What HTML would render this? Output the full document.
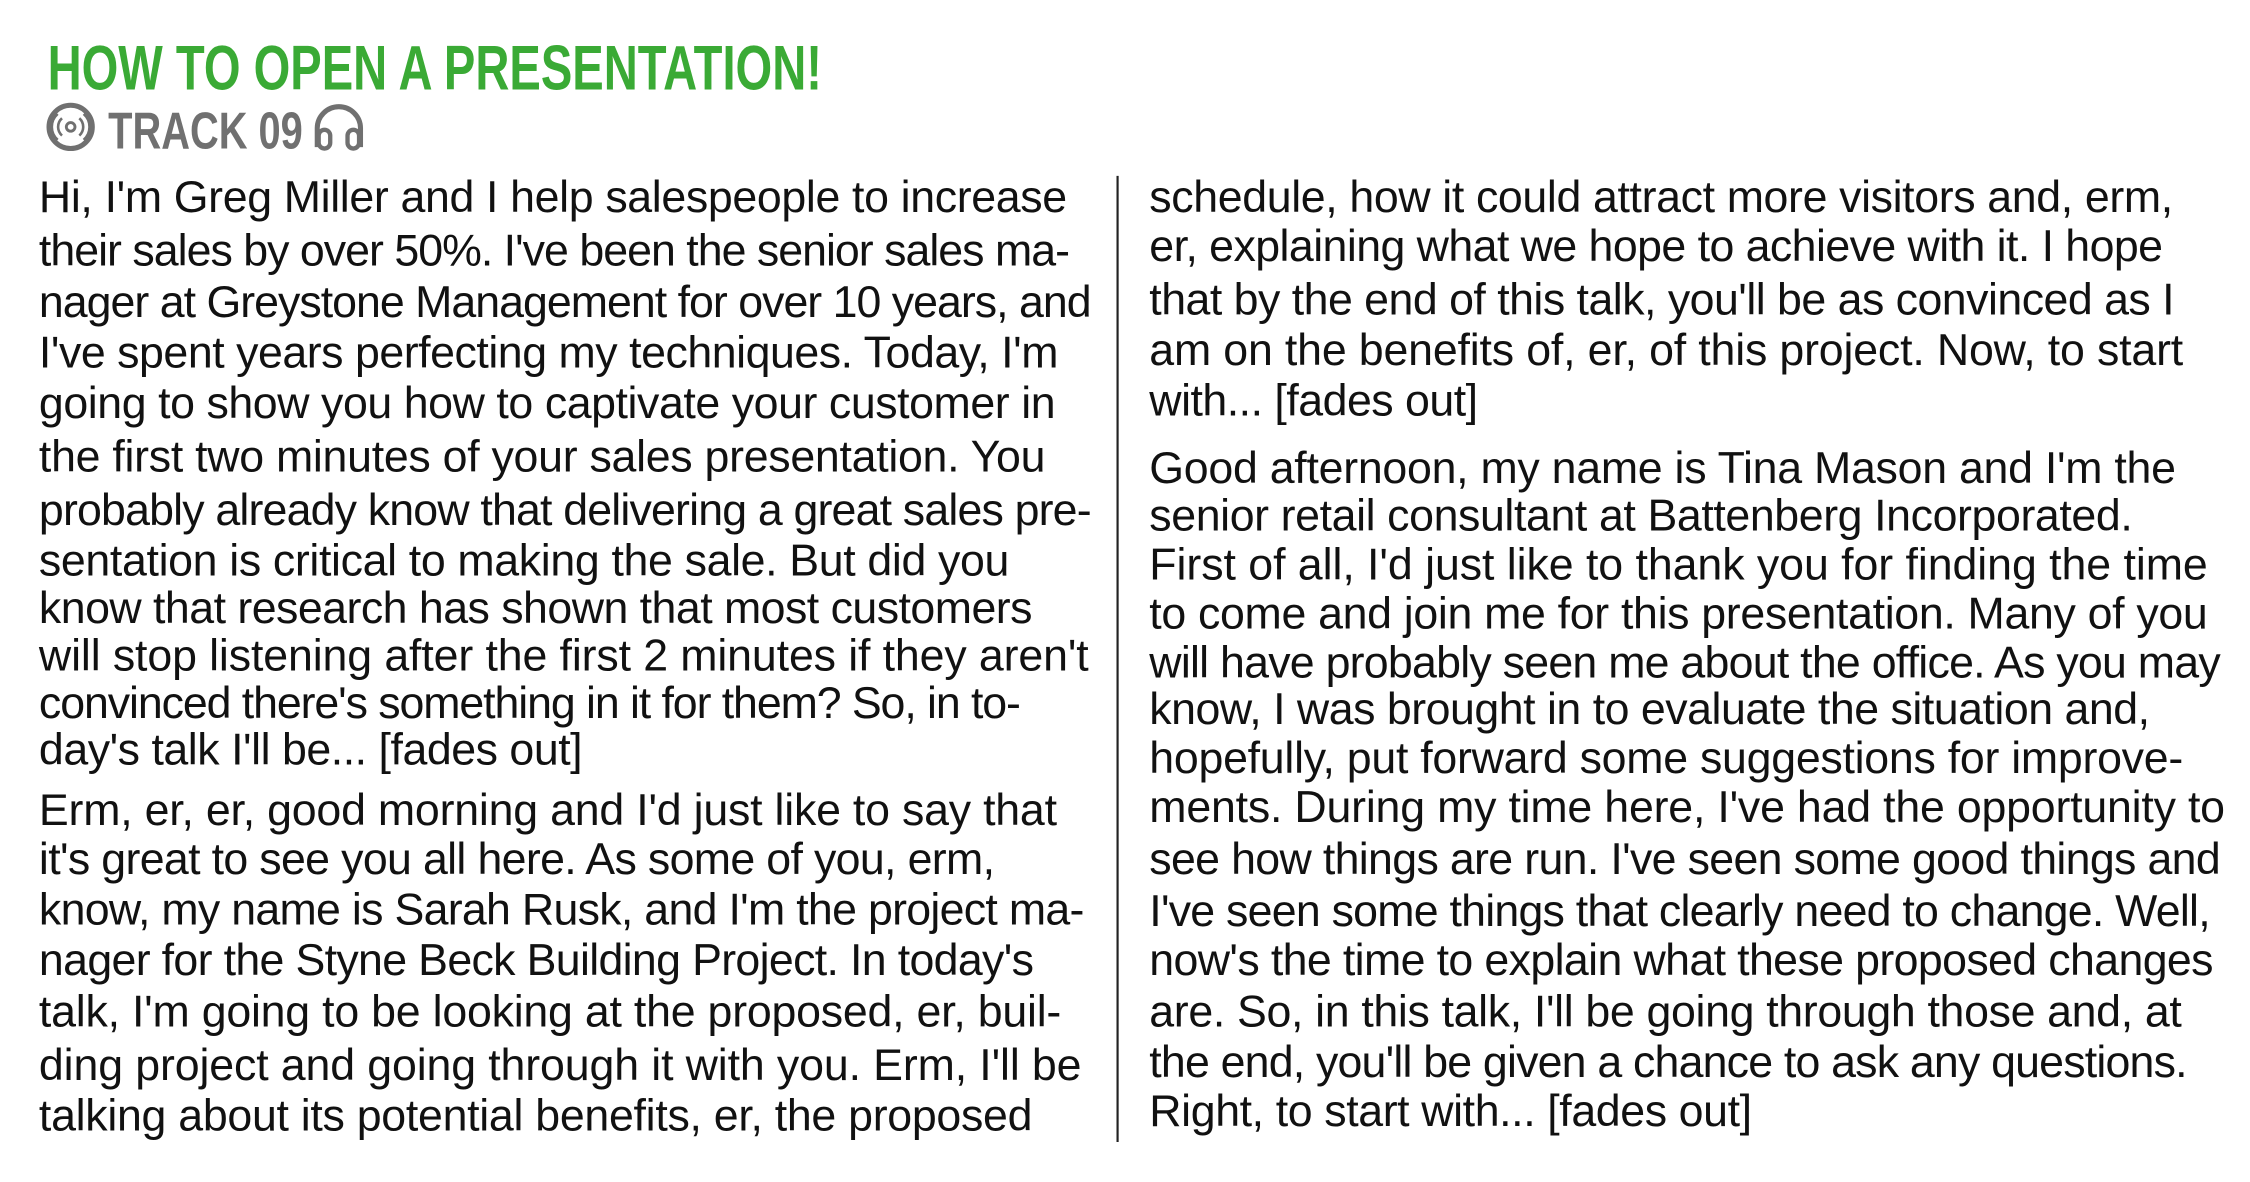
<!DOCTYPE html>
<html><head><meta charset="utf-8"><style>html,body{margin:0;padding:0;background:#fff;}svg{display:block}</style></head>
<body>
<svg width="2250" height="1182" viewBox="0 0 1560.3 819.7" preserveAspectRatio="none" xmlns="http://www.w3.org/2000/svg">
<rect width="1561" height="820" fill="#fff"/>
<text x="33" y="62" font-family="Liberation Sans Narrow, Liberation Sans, sans-serif" font-weight="bold" font-size="44" fill="#3aaa35" textLength="537" lengthAdjust="spacingAndGlyphs">HOW TO OPEN A PRESENTATION!</text>
<g fill="none" stroke="#707070">
<circle cx="49" cy="88" r="15" stroke-width="3.5"/>
<circle cx="49" cy="88" r="3" stroke-width="2"/>
<path d="M43 82 A8 8 0 0 0 43 94 M55 82 A8 8 0 0 1 55 94 M40 79 A12 12 0 0 0 40 97 M58 79 A12 12 0 0 1 58 97" stroke-width="1.8"/>
<path d="M220 102 V89 A15 15 0 0 1 250 89 V102" stroke-width="3.5"/>
<rect x="221" y="90" width="8" height="13" rx="4" stroke-width="3"/>
<rect x="241" y="90" width="8" height="13" rx="4" stroke-width="3"/>
</g>
<text x="75" y="103" font-family="Liberation Sans Narrow, Liberation Sans, sans-serif" font-weight="bold" font-size="36" fill="#707070" textLength="135" lengthAdjust="spacingAndGlyphs">TRACK 09</text>
<line x1="775" y1="122" x2="775" y2="792" stroke="#222" stroke-width="1.5"/>
<g font-family="Liberation Sans Narrow, Liberation Sans, sans-serif" font-size="31" fill="#111" lengthAdjust="spacingAndGlyphs">
<text x="27" y="147" textLength="713">Hi, I'm Greg Miller and I help salespeople to increase</text>
<text x="27" y="184" textLength="715">their sales by over 50%. I've been the senior sales ma-</text>
<text x="27" y="220" textLength="730">nager at Greystone Management for over 10 years, and</text>
<text x="27" y="255" textLength="707">I've spent years perfecting my techniques. Today, I'm</text>
<text x="27" y="290" textLength="705">going to show you how to captivate your customer in</text>
<text x="27" y="327" textLength="698">the first two minutes of your sales presentation. You</text>
<text x="27" y="364" textLength="730">probably already know that delivering a great sales pre-</text>
<text x="27" y="399" textLength="673">sentation is critical to making the sale. But did you</text>
<text x="27" y="432" textLength="689">know that research has shown that most customers</text>
<text x="27" y="465" textLength="728">will stop listening after the first 2 minutes if they aren't</text>
<text x="27" y="498" textLength="681">convinced there's something in it for them? So, in to-</text>
<text x="27" y="530" textLength="377">day's talk I'll be... [fades out]</text>
<text x="27" y="572" textLength="706">Erm, er, er, good morning and I'd just like to say that</text>
<text x="27" y="606" textLength="663">it's great to see you all here. As some of you, erm,</text>
<text x="27" y="641" textLength="725">know, my name is Sarah Rusk, and I'm the project ma-</text>
<text x="27" y="676" textLength="690">nager for the Styne Beck Building Project. In today's</text>
<text x="27" y="712" textLength="709">talk, I'm going to be looking at the proposed, er, buil-</text>
<text x="27" y="749" textLength="723">ding project and going through it with you. Erm, I'll be</text>
<text x="27" y="784" textLength="689">talking about its potential benefits, er, the proposed</text>

<text x="797" y="147" textLength="710">schedule, how it could attract more visitors and, erm,</text>
<text x="797" y="181" textLength="703">er, explaining what we hope to achieve with it. I hope</text>
<text x="797" y="218" textLength="711">that by the end of this talk, you'll be as convinced as I</text>
<text x="797" y="253" textLength="717">am on the benefits of, er, of this project. Now, to start</text>
<text x="797" y="288" textLength="228">with... [fades out]</text>
<text x="797" y="335" textLength="712">Good afternoon, my name is Tina Mason and I'm the</text>
<text x="797" y="368" textLength="682">senior retail consultant at Battenberg Incorporated.</text>
<text x="797" y="402" textLength="734">First of all, I'd just like to thank you for finding the time</text>
<text x="797" y="436" textLength="734">to come and join me for this presentation. Many of you</text>
<text x="797" y="470" textLength="743">will have probably seen me about the office. As you may</text>
<text x="797" y="502" textLength="694">know, I was brought in to evaluate the situation and,</text>
<text x="797" y="536" textLength="717">hopefully, put forward some suggestions for improve-</text>
<text x="797" y="570" textLength="746">ments. During my time here, I've had the opportunity to</text>
<text x="797" y="606" textLength="743">see how things are run. I've seen some good things and</text>
<text x="797" y="642" textLength="736">I've seen some things that clearly need to change. Well,</text>
<text x="797" y="676" textLength="738">now's the time to explain what these proposed changes</text>
<text x="797" y="712" textLength="716">are. So, in this talk, I'll be going through those and, at</text>
<text x="797" y="747" textLength="720">the end, you'll be given a chance to ask any questions.</text>
<text x="797" y="781" textLength="418">Right, to start with... [fades out]</text>
</g>
</svg>
</body></html>
